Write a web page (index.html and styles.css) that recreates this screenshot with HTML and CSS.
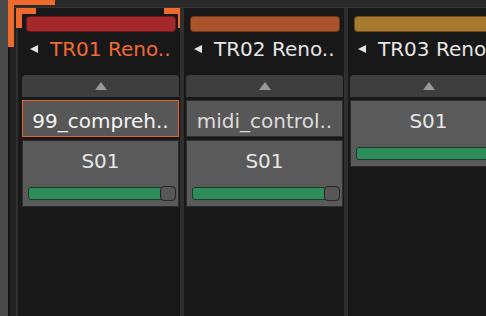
FILE: index.html
```html
<!DOCTYPE html>
<html lang="en">
<head>
    <meta charset="UTF-8">
    <meta name="viewport" content="width=device-width, initial-scale=1.0">
    <title>Mixer Strips</title>
    <link rel="stylesheet" href="styles.css">
</head>
<body>

    <div class="app">
        <div class="sidebar"></div>
        <div class="main">
            <div class="topbar"></div>
            <div class="tracks">
                <div class="gutter"></div>

                <div class="strip first selected">
                    <div class="color-bar red"></div>
                    <div class="title">
                        <svg class="arrow" width="8" height="8" viewBox="0 0 8 8"><polygon points="8,0 8,8 0,4" fill="#e4e4e4"/></svg>
                        <span class="title-text">TR01 Reno..</span>
                    </div>
                    <div class="up-btn">
                        <svg width="12" height="8" viewBox="0 0 12 8"><polygon points="0,8 12,8 6,0" fill="#9a9a9a"/></svg>
                    </div>
                    <div class="name active">99_compreh..</div>
                    <div class="slot">
                        <div class="slot-label">S01</div>
                        <div class="slider"><div class="knob"></div></div>
                    </div>
                    <!-- selection corners -->
                    <span class="corner tl"></span>
                    <span class="corner tr"></span>
                </div>

                <div class="strip">
                    <div class="color-bar sienna"></div>
                    <div class="title">
                        <svg class="arrow" width="8" height="8" viewBox="0 0 8 8"><polygon points="8,0 8,8 0,4" fill="#e4e4e4"/></svg>
                        <span class="title-text">TR02 Reno..</span>
                    </div>
                    <div class="up-btn">
                        <svg width="12" height="8" viewBox="0 0 12 8"><polygon points="0,8 12,8 6,0" fill="#9a9a9a"/></svg>
                    </div>
                    <div class="name">midi_control..</div>
                    <div class="slot">
                        <div class="slot-label">S01</div>
                        <div class="slider"><div class="knob"></div></div>
                    </div>
                </div>

                <div class="strip">
                    <div class="color-bar ochre"></div>
                    <div class="title">
                        <svg class="arrow" width="8" height="8" viewBox="0 0 8 8"><polygon points="8,0 8,8 0,4" fill="#e4e4e4"/></svg>
                        <span class="title-text">TR03 Reno..</span>
                    </div>
                    <div class="up-btn">
                        <svg width="12" height="8" viewBox="0 0 12 8"><polygon points="0,8 12,8 6,0" fill="#9a9a9a"/></svg>
                    </div>
                    <div class="slot">
                        <div class="slot-label">S01</div>
                        <div class="slider"><div class="knob"></div></div>
                    </div>
                </div>
            </div>
        </div>

        <!-- outer focus corner -->
        <span class="focus-h"></span>
        <span class="focus-v"></span>
    </div>

</body>
</html>
```

FILE: styles.css
```css
body {
    margin: 0;
    background-color: #1a1a1a;
    font-family: "DejaVu Sans", sans-serif;
    overflow: hidden;
}

.app {
    position: relative;
    display: flex;
    width: 486px;
    height: 316px;
    overflow: hidden;
}

.sidebar {
    width: 8px;
    flex-shrink: 0;
    background-color: #494949;
}

.main {
    flex: 1;
    display: flex;
    flex-direction: column;
    min-width: 0;
}

.topbar {
    height: 7px;
    background-color: #292929;
    border-bottom: 1px solid #363636;
}

.tracks {
    flex: 1;
    display: flex;
}

.gutter {
    width: 6px;
    flex-shrink: 0;
    background-color: #222;
    border-left: 2px solid #141414;
}

.strip {
    position: relative;
    width: 164px;
    flex-shrink: 0;
    box-sizing: border-box;
    background-color: #181818;
    border-left: 4px solid #2f2f2f;
    padding: 8px 1px 0 2px;
    display: flex;
    flex-direction: column;
}

.strip.first {
    border-left-width: 2px;
    padding-left: 4px;
}

/* Track colour */
.color-bar {
    height: 16px;
    margin: 0 3px 0 4px;
    box-sizing: border-box;
    border-radius: 4px;
    border: 1px solid rgba(0, 0, 0, 0.35);
}

.red { background-color: #a4282a; }
.sienna { background-color: #a9532b; }
.ochre { background-color: #a87a2f; }

.title {
    height: 24px;
    margin-top: 5px;
    display: flex;
    align-items: center;
    white-space: nowrap;
}

.arrow {
    margin-left: 8px;
    margin-right: 12px;
    flex-shrink: 0;
}

.title-text {
    font-size: 20px;
    line-height: 24px;
    color: #e6e6e6;
}

.selected .title-text {
    color: #f26b32;
}

.up-btn {
    height: 22px;
    margin-top: 14px;
    background-color: #3e3e3e;
    border-radius: 4px 4px 0 0;
    display: flex;
    justify-content: center;
    align-items: center;
}

.name {
    height: 37px;
    margin-top: 3px;
    box-sizing: border-box;
    padding-top: 8px;
    background-color: #575757;
    border: 1px solid #2e2e2e;
    color: #dcdcdc;
    font-size: 20px;
    line-height: 24px;
    text-align: center;
    white-space: nowrap;
    overflow: hidden;
}

.name.active {
    border-color: #e8642c;
    color: #f4f4f4;
}

.slot {
    height: 67px;
    margin-top: 3px;
    box-sizing: border-box;
    background-color: #5a5a5a;
    border: 1px solid #2e2e2e;
    padding-top: 8px;
}

.slot-label {
    font-size: 20px;
    line-height: 24px;
    color: #e6e6e6;
    text-align: center;
}

.slider {
    position: relative;
    height: 13px;
    margin: 14px 2px 0 5px;
    box-sizing: border-box;
    background-color: #2e8c5a;
    border: 1px solid #1c3b2a;
    border-radius: 3px;
}

.knob {
    position: absolute;
    right: -1px;
    top: -2px;
    width: 16px;
    height: 15px;
    box-sizing: border-box;
    background-color: #575757;
    border: 1px solid #262626;
    border-radius: 4px;
}

/* Selection corners */
.corner {
    position: absolute;
    top: 0;
    width: 20px;
    height: 20px;
    box-sizing: border-box;
    border-top: 6px solid #ef6b2d;
}

.corner.tl {
    left: -2px;
    border-left: 6px solid #ef6b2d;
}

.corner.tr {
    right: -4px;
    border-right: 6px solid #ef6b2d;
}

.focus-h {
    position: absolute;
    left: 8px;
    top: 0;
    width: 47px;
    height: 5px;
    background-color: #ef6b2d;
}

.focus-v {
    position: absolute;
    left: 8px;
    top: 0;
    width: 6px;
    height: 47px;
    background-color: #ef6b2d;
}
```
